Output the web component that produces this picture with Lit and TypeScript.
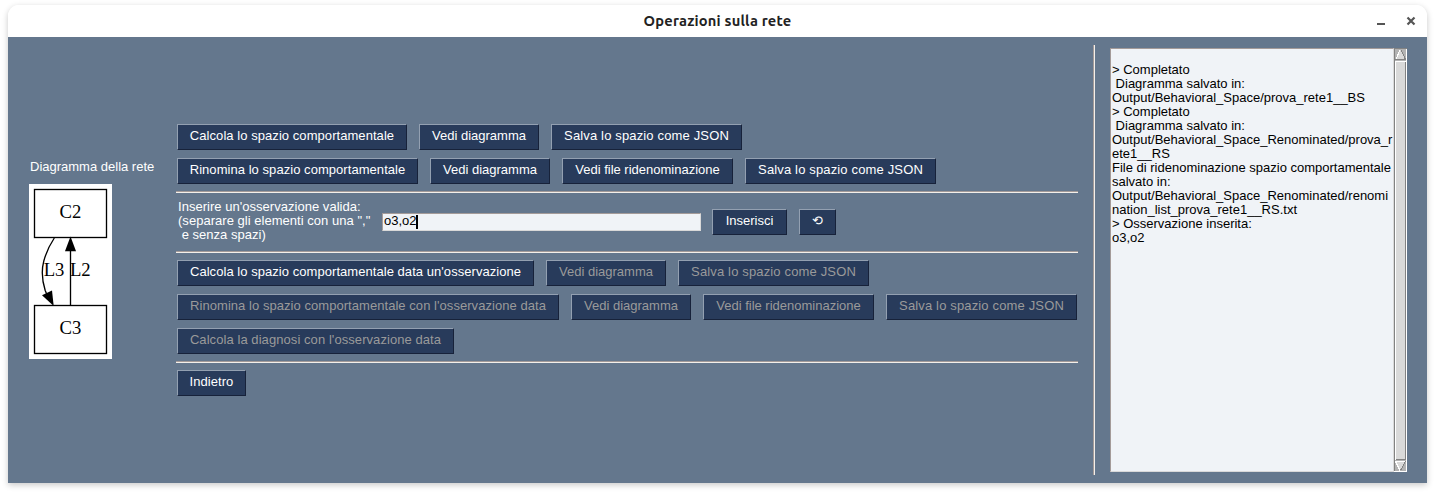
import { LitElement, html, css, svg } from "lit";
import { customElement, property } from "lit/decorators.js";
import { classMap } from "lit/directives/class-map.js";
import { styleMap } from "lit/directives/style-map.js";

interface Action {
  label: string;
  width: number;
  spacing?: number;
  disabled?: boolean;
}

const SPACE_ROWS: Action[][] = [
  [
    { label: "Calcola lo spazio comportamentale", width: 230, spacing: 0.06 },
    { label: "Vedi diagramma", width: 120 },
    { label: "Salva lo spazio come JSON", width: 191, spacing: 0.15 },
  ],
  [
    { label: "Rinomina lo spazio comportamentale", width: 241, spacing: 0.05 },
    { label: "Vedi diagramma", width: 120 },
    { label: "Vedi file ridenominazione", width: 171 },
    { label: "Salva lo spazio come JSON", width: 191, spacing: 0.15 },
  ],
];

const OBSERVATION_ROWS: Action[][] = [
  [
    { label: "Calcola lo spazio comportamentale data un'osservazione", width: 357, spacing: 0.05 },
    { label: "Vedi diagramma", width: 120, disabled: true },
    { label: "Salva lo spazio come JSON", width: 191, spacing: 0.15, disabled: true },
  ],
  [
    { label: "Rinomina lo spazio comportamentale con l'osservazione data", width: 382, spacing: 0.05, disabled: true },
    { label: "Vedi diagramma", width: 120, disabled: true },
    { label: "Vedi file ridenominazione", width: 171, disabled: true },
    { label: "Salva lo spazio come JSON", width: 191, spacing: 0.15, disabled: true },
  ],
  [{ label: "Calcola la diagnosi con l'osservazione data", width: 277, spacing: 0.07, disabled: true }],
];

const LOG = [
  "",
  "> Completato",
  " Diagramma salvato in:",
  "Output/Behavioral_Space/prova_rete1__BS",
  "> Completato",
  " Diagramma salvato in:",
  "Output/Behavioral_Space_Renominated/prova_r",
  "ete1__RS",
  "File di ridenominazione spazio comportamentale",
  "salvato in:",
  "Output/Behavioral_Space_Renominated/renomi",
  "nation_list_prova_rete1__RS.txt",
  "> Osservazione inserita:",
  "o3,o2",
];

@customElement("tk-button")
class TkButton extends LitElement {
  @property() label = "";
  @property({ type: Number }) width = 0;
  @property({ type: Number }) spacing = 0;
  @property({ type: Boolean }) disabled = false;

  static styles = css`
    :host { display: block; }
    .button {
      display: block;
      box-sizing: border-box;
      height: 26px;
      margin: 0;
      padding: 0 0 2px;
      border: 1px solid;
      border-color: #93a0b1 #17223a #17223a #93a0b1;
      border-radius: 0;
      background: #283b5b;
      color: #fff;
      font: 13px/22px "Liberation Sans", Arial, sans-serif;
      white-space: nowrap;
      text-align: center;
    }
    .disabled { color: #9a9a9a; }
  `;

  render() {
    return html`<button
      class=${classMap({ button: true, disabled: this.disabled })}
      style=${styleMap({ width: `${this.width}px`, letterSpacing: `${this.spacing}px` })}
      ?disabled=${this.disabled}
    >${this.label}</button>`;
  }
}

@customElement("net-diagram")
class NetDiagram extends LitElement {
  static styles = css`
    :host { display: block; }
    .canvas { display: block; background: #fff; }
    .node { fill: none; stroke: #000; stroke-width: 1.33; }
    .edge { fill: none; stroke: #000; stroke-width: 1.33; }
    .head { fill: #000; }
    .name { font: 18.67px "Liberation Serif", "Times New Roman", serif; text-anchor: middle; }
  `;

  render() {
    return html`<svg class="canvas" width="83" height="175" viewBox="0 0 83 175">
      ${svg`
        <rect class="node" x="5.5" y="5.5" width="72" height="48"/>
        <rect class="node" x="5.5" y="121.5" width="72" height="48"/>
        <path class="edge" d="M25.3 54C21 60.500 17 69 14.800 77C12.400 86 12.900 96 16.200 106.500L18.500 112"/>
        <path class="head" d="M13 111.300L23 106.500L24.700 122Z"/>
        <path class="edge" d="M41.500 121V66"/>
        <path class="head" d="M36 67.300L41.500 52.500L47 67.300Z"/>
        <text class="name" x="41.500" y="34">C2</text>
        <text class="name" x="41.500" y="150">C3</text>
        <text class="name" x="25" y="92">L3</text>
        <text class="name" x="51.300" y="92">L2</text>
      `}
    </svg>`;
  }
}

@customElement("app-root")
class AppRoot extends LitElement {
  static styles = css`
    :host {
      display: block;
      box-sizing: border-box;
      height: 494px;
      padding: 5px 8px 11px;
      overflow: hidden;
      background: #fff;
      font: 13px/14px "Liberation Sans", Arial, sans-serif;
      color: #fff;
    }
    .window {
      display: flex;
      flex-direction: column;
      height: 478px;
      border-radius: 11px 11px 0 0;
      box-shadow: 0 2px 6px rgba(0, 0, 0, 0.22);
    }
    .titlebar {
      display: grid;
      grid-template-columns: 1fr auto 1fr;
      align-items: center;
      height: 32px;
      border-radius: 11px 11px 0 0;
      background: #fff;
      color: #222;
    }
    .title {
      grid-column: 2;
      font: bold 14.67px/20px Ubuntu, "Noto Sans", sans-serif;
      letter-spacing: 0.2px;
      white-space: nowrap;
    }
    .controls { justify-self: end; display: block; margin-right: 10px; }
    .body { display: flex; height: 446px; background: #64778d; }
    .network { width: 147px; padding: 123px 0 0 21px; }
    .caption { padding-left: 1px; margin-bottom: 10px; white-space: nowrap; }
    .actions { display: flex; flex-direction: column; width: 902px; padding-top: 87px; }
    .row { display: flex; gap: 12px; margin: 0 0 8px 1px; }
    .rule { height: 1px; background: #a49b99; border-bottom: 1px solid #f3efea; margin: -1px 0 0; }
    .observation { display: flex; height: 59px; }
    .prompt { width: 204px; padding: 7px 0 0 2px; white-space: pre; letter-spacing: 0.03px; }
    .field {
      box-sizing: border-box;
      display: flex;
      width: 319px;
      height: 18px;
      margin: 20px 11px 0 0;
      padding: 0 0 0 1px;
      border: 1px solid;
      border-color: #a49b99 #d9d9d9 #d9d9d9 #a49b99;
      background: #f0f3f7;
      color: #000;
    }
    .caret { width: 2px; height: 14px; background: #000; margin: 1px 0 0 -1px; }
    .submit { display: flex; gap: 12px; padding-top: 16px; }
    .section { padding-top: 7px; }
    .divider { width: 1px; height: 430px; margin: 8px 15px 0; background: #a49b99; border-right: 1px solid #f3efea; }
    .output { display: flex; height: 424px; margin-top: 11px; }
    .log {
      box-sizing: border-box;
      width: 284px;
      margin: 0;
      padding: 0 0 0 1px;
      border: 1px solid;
      border-color: #a49b99 #d9d9d9 #d9d9d9 #a49b99;
      background: #f0f3f7;
      color: #000;
      font: 13px/14px "Liberation Sans", Arial, sans-serif;
      white-space: pre;
    }
    .scroll { display: block; }
  `;

  private rows(rows: Action[][]) {
    return rows.map(
      (row) => html`<div class="row">
        ${row.map(
          (a) => html`<tk-button
            .label=${a.label}
            .width=${a.width}
            .spacing=${a.spacing ?? 0}
            .disabled=${!!a.disabled}
          ></tk-button>`,
        )}
      </div>`,
    );
  }

  render() {
    return html`<div class="window">
      <div class="titlebar">
        <div class="title">Operazioni sulla rete</div>
        <svg class="controls" width="42" height="16" viewBox="0 0 42 16">
          <path d="M2 11H10" stroke="#555" stroke-width="2" />
          <path d="M32.500 4.500L39.500 11.500M39.500 4.500L32.500 11.500" stroke="#555" stroke-width="2.200" />
        </svg>
      </div>
      <div class="body">
        <div class="network">
          <div class="caption">Diagramma della rete</div>
          <net-diagram></net-diagram>
        </div>
        <div class="actions">
          ${this.rows(SPACE_ROWS)}
          <div class="rule"></div>
          <div class="observation">
            <div class="prompt">${"Inserire un'osservazione valida:\n(separare gli elementi con una \",\"\n e senza spazi)"}</div>
            <div class="field"><span>o3,o2</span><span class="caret"></span></div>
            <div class="submit">
              <tk-button label="Inserisci" .width=${75}></tk-button>
              <tk-button label="⟲" .width=${37}></tk-button>
            </div>
          </div>
          <div class="rule"></div>
          <div class="section">${this.rows(OBSERVATION_ROWS)}</div>
          <div class="rule"></div>
          <div class="section">${this.rows([[{ label: "Indietro", width: 69, spacing: 0.05 }]])}</div>
        </div>
        <div class="divider"></div>
        <div class="output">
          <pre class="log">${LOG.join("\n")}</pre>
          <svg class="scroll" width="13" height="424" viewBox="0 0 13 424" shape-rendering="crispEdges">
            <rect width="13" height="424" fill="#b3b3b3" />
            <path d="M0 424V0H13" fill="none" stroke="#828282" stroke-width="2" />
            <path d="M12.500 1V423.500H0" fill="none" stroke="#fff" />
            <path d="M6.500 2L12 12H1Z" fill="#d9d9d9" />
            <path d="M6 2L1.500 12" stroke="#fff" />
            <path d="M7 2L11.500 11.500H1" fill="none" stroke="#828282" />
            <rect x="1" y="13" width="11" height="399" fill="#d9d9d9" />
            <path d="M1.500 412V13.500H12" fill="none" stroke="#fff" />
            <path d="M11.500 14V411.500H2" fill="none" stroke="#828282" />
            <path d="M1 413.500H12L6.500 422.500Z" fill="#d9d9d9" />
            <path d="M12 413.500H1.500L6 422.500" fill="none" stroke="#fff" />
            <path d="M11.500 413.500L6.500 422.500" stroke="#828282" />
          </svg>
        </div>
      </div>
    </div>`;
  }
}
